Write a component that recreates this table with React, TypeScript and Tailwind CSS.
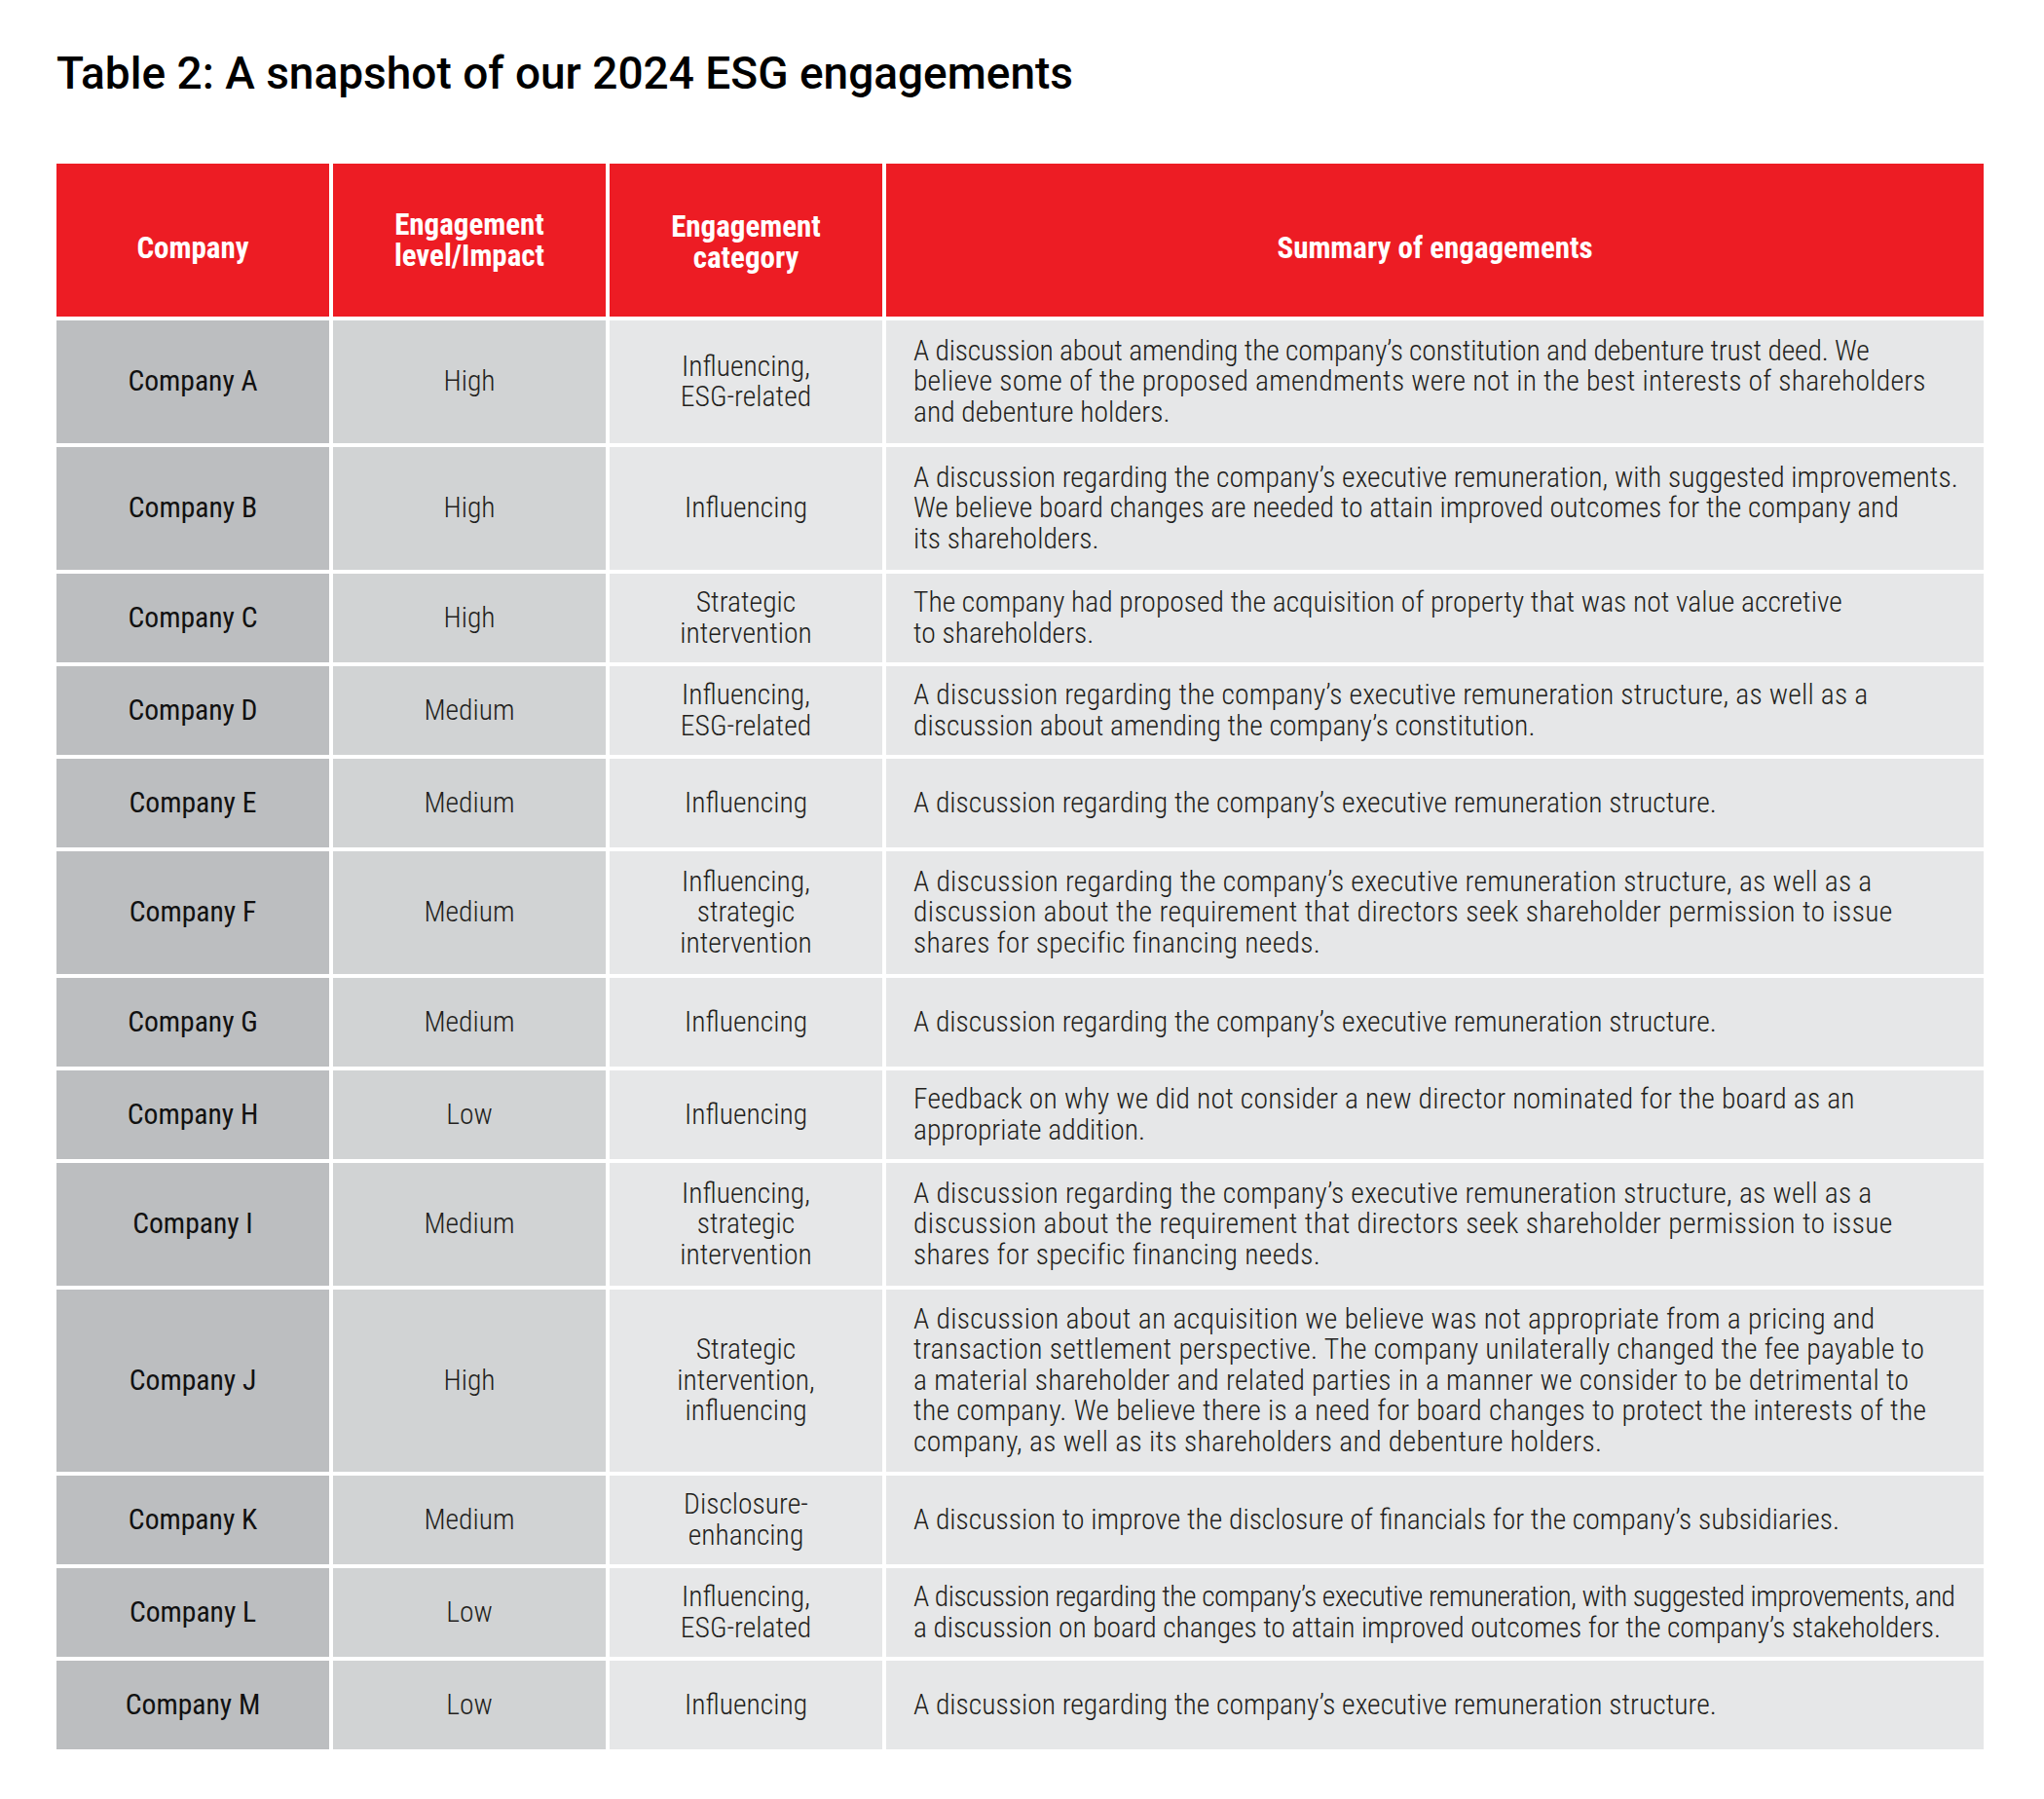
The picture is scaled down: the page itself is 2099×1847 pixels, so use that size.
import React from "react";

type Line = { t: string; cls?: string };
type Row = {
  company: string;
  level: string;
  category: string[];
  summary: Line[];
  h: string;
};

const E: Line[] = [{ t: "A discussion regarding the company’s executive remuneration structure." }];
const F: Line[] = [
  { t: "A discussion regarding the company’s executive remuneration structure, as well as a", cls: "tracking-[0.25px]" },
  { t: "discussion about the requirement that directors seek shareholder permission to issue", cls: "tracking-[0.35px]" },
  { t: "shares for specific financing needs.", cls: "tracking-[0.3px]" },
];

const rows: Row[] = [
  {
    company: "Company A",
    level: "High",
    category: ["Influencing,", "ESG-related"],
    h: "min-h-[126px]",
    summary: [
      { t: "A discussion about amending the company’s constitution and debenture trust deed. We", cls: "tracking-[-0.2px]" },
      { t: "believe some of the proposed amendments were not in the best interests of shareholders", cls: "tracking-[0.23px]" },
      { t: "and debenture holders." },
    ],
  },
  {
    company: "Company B",
    level: "High",
    category: ["Influencing"],
    h: "min-h-[126px]",
    summary: [
      { t: "A discussion regarding the company’s executive remuneration, with suggested improvements." },
      { t: "We believe board changes are needed to attain improved outcomes for the company and" },
      { t: "its shareholders." },
    ],
  },
  {
    company: "Company C",
    level: "High",
    category: ["Strategic", "intervention"],
    h: "min-h-[91px]",
    summary: [
      { t: "The company had proposed the acquisition of property that was not value accretive" },
      { t: "to shareholders." },
    ],
  },
  {
    company: "Company D",
    level: "Medium",
    category: ["Influencing,", "ESG-related"],
    h: "min-h-[91px]",
    summary: [
      { t: "A discussion regarding the company’s executive remuneration structure, as well as a", cls: "tracking-[0.2px]" },
      { t: "discussion about amending the company’s constitution." },
    ],
  },
  { company: "Company E", level: "Medium", category: ["Influencing"], summary: E, h: "min-h-[91px]" },
  {
    company: "Company F",
    level: "Medium",
    category: ["Influencing,", "strategic", "intervention"],
    summary: F,
    h: "min-h-[126px]",
  },
  { company: "Company G", level: "Medium", category: ["Influencing"], summary: E, h: "min-h-[91px]" },
  {
    company: "Company H",
    level: "Low",
    category: ["Influencing"],
    h: "min-h-[91px]",
    summary: [
      { t: "Feedback on why we did not consider a new director nominated for the board as an", cls: "tracking-[0.2px]" },
      { t: "appropriate addition." },
    ],
  },
  {
    company: "Company I",
    level: "Medium",
    category: ["Influencing,", "strategic", "intervention"],
    summary: F,
    h: "min-h-[126px]",
  },
  {
    company: "Company J",
    level: "High",
    category: ["Strategic", "intervention,", "influencing"],
    h: "min-h-[187px]",
    summary: [
      { t: "A discussion about an acquisition we believe was not appropriate from a pricing and", cls: "tracking-[0.3px]" },
      { t: "transaction settlement perspective. The company unilaterally changed the fee payable to", cls: "tracking-[0.3px]" },
      { t: "a material shareholder and related parties in a manner we consider to be detrimental to", cls: "tracking-[0.3px]" },
      { t: "the company. We believe there is a need for board changes to protect the interests of the", cls: "tracking-[0.3px]" },
      { t: "company, as well as its shareholders and debenture holders.", cls: "tracking-[0.3px]" },
    ],
  },
  {
    company: "Company K",
    level: "Medium",
    category: ["Disclosure-", "enhancing"],
    h: "min-h-[91px]",
    summary: [
      { t: "A discussion to improve the disclosure of financials for the company’s subsidiaries." },
    ],
  },
  {
    company: "Company L",
    level: "Low",
    category: ["Influencing,", "ESG-related"],
    h: "min-h-[91px]",
    summary: [
      {
        t: "A discussion regarding the company’s executive remuneration, with suggested improvements, and",
        cls: "tracking-[-0.55px]",
      },
      {
        t: "a discussion on board changes to attain improved outcomes for the company’s stakeholders.",
        cls: "tracking-[-0.1px]",
      },
    ],
  },
  { company: "Company M", level: "Low", category: ["Influencing"], summary: E, h: "min-h-[91px]" },
];

const font = "font-['Roboto_Condensed',Roboto,'Liberation_Sans',sans-serif]";
const head =
  "flex h-[157px] items-center justify-center bg-[#ED1C24] text-center text-[31px] font-bold leading-[32px] text-white";

export default function App() {
  return (
    <div className={`min-h-[1847px] w-[2099px] bg-white pl-[58px] pt-[52px] ${font}`}>
      <h1 className="font-['Roboto','Liberation_Sans',sans-serif] text-[46px] font-medium leading-[47px] text-black">
        Table 2: A snapshot of our 2024 ESG engagements
      </h1>
      <div className="mt-[69px] grid w-[1979px] grid-cols-[280px_280px_280px_1fr] gap-x-[4px] gap-y-[4px]">
        <div className={`${head} pt-[16px]`}>Company</div>
        <div className={head}>
          <div>
            <span className="block">Engagement</span>
            <span className="block">level/Impact</span>
          </div>
        </div>
        <div className={`${head} pt-[4px]`}>
          <div>
            <span className="block">Engagement</span>
            <span className="block">category</span>
          </div>
        </div>
        <div className={`${head} pt-[16px]`}>Summary of engagements</div>
        {rows.map((r) => (
          <React.Fragment key={r.company}>
            <div
              className={`flex ${r.h} items-center justify-center bg-[#BCBEC0] text-center text-[29.6px] font-normal leading-[31.5px] text-[#111111]`}
            >
              {r.company}
            </div>
            <div
              className={`flex ${r.h} items-center justify-center bg-[#D1D3D4] text-center text-[29.6px] font-light leading-[31.5px] text-[#231F20]`}
            >
              {r.level}
            </div>
            <div
              className={`flex ${r.h} items-center justify-center bg-[#E6E7E8] text-center text-[29.6px] font-light leading-[31.5px] text-[#231F20]`}
            >
              <div>
                {r.category.map((c, i) => (
                  <span key={i} className="block whitespace-nowrap">
                    {c}
                  </span>
                ))}
              </div>
            </div>
            <div
              className={`flex ${r.h} items-center bg-[#E6E7E8] pl-[28px] text-[29.6px] font-light leading-[31.5px] text-[#231F20]`}
            >
              <div>
                {r.summary.map((l, i) => (
                  <span key={i} className={`block whitespace-nowrap ${l.cls ?? ""}`}>
                    {l.t}
                  </span>
                ))}
              </div>
            </div>
          </React.Fragment>
        ))}
      </div>
    </div>
  );
}
